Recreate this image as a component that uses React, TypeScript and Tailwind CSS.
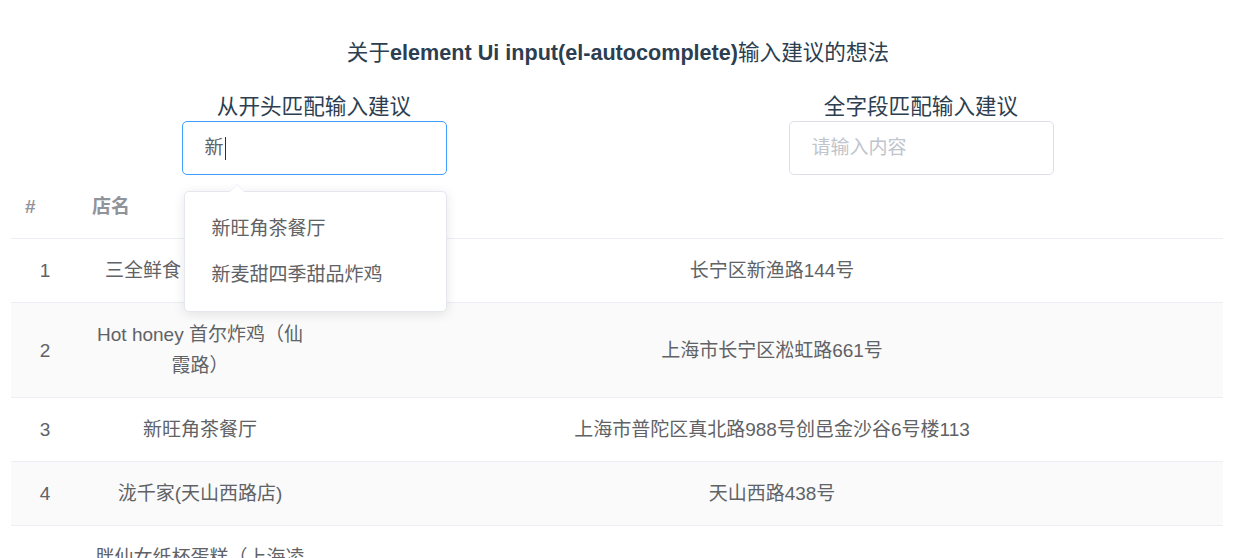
import React from "react";

const rows = [
  { id: 1, name: "三全鲜食（北新泾店）", addr: "长宁区新渔路144号" },
  { id: 2, name: "Hot honey 首尔炸鸡（仙霞路）", addr: "上海市长宁区淞虹路661号" },
  { id: 3, name: "新旺角茶餐厅", addr: "上海市普陀区真北路988号创邑金沙谷6号楼113" },
  { id: 4, name: "泷千家(天山西路店)", addr: "天山西路438号" },
  { id: 5, name: "胖仙女纸杯蛋糕（上海凌空店）", addr: "上海市长宁区金钟路968号9号楼地下一层" },
];

export default function App() {
  return (
    <div
      className="w-[1236px] h-[558px] overflow-hidden bg-white text-[#2c3e50]"
      style={{ fontFamily: '"Liberation Sans", "Noto Sans CJK SC", sans-serif' }}
    >
      <div className="pt-[37px] text-center text-[21.6px] leading-[32px] font-bold">
        <span className="font-normal">关于</span>element Ui input(el-autocomplete)<span className="font-normal">输入建议的想法</span>
      </div>

      <div className="ml-[11px] w-[1212px] mt-[24px] grid grid-cols-2">
        <div className="flex flex-col items-center">
          <div className="text-[21.6px] leading-[28px]">从开头匹配输入建议</div>
          <div className="relative w-[265px]">
            <div className="h-[54px] border border-[#409eff] rounded-[5px] flex items-center pl-[22px] text-[19px] text-[#606266]">
              <span>新</span>
              <span className="inline-block w-[1px] h-[23px] bg-[#303133] ml-[1px]" />
            </div>
            <div className="absolute z-10 left-[2px] top-[70px] w-[263px] bg-white border border-[#e4e7ed] rounded-[5px] shadow-[0_2px_12px_rgba(0,0,0,0.1)] pt-[14px] pb-[13px]">
              <div className="absolute -top-[8px] left-[44px] w-0 h-0 border-l-[8px] border-r-[8px] border-b-[8px] border-l-transparent border-r-transparent border-b-[#ebeef5]" />
              <div className="absolute -top-[7px] left-[45px] w-0 h-0 border-l-[7px] border-r-[7px] border-b-[7px] border-l-transparent border-r-transparent border-b-white" />
              <div className="h-[46px] leading-[46px] px-[27px] text-[19px] text-[#606266]">新旺角茶餐厅</div>
              <div className="h-[46px] leading-[46px] px-[27px] text-[19px] text-[#606266]">新麦甜四季甜品炸鸡</div>
            </div>
          </div>
        </div>
        <div className="flex flex-col items-center pl-[2px]">
          <div className="text-[21.6px] leading-[28px]">全字段匹配输入建议</div>
          <div className="w-[265px] h-[54px] border border-[#dcdfe6] rounded-[5px] flex items-center pl-[22px] text-[19px] text-[#c0c4cc]">
            请输入内容
          </div>
        </div>
      </div>

      <table className="ml-[11px] w-[1212px] table-fixed border-collapse text-[19px] leading-[31px] text-[#606266]">
        <colgroup>
          <col className="w-[68px]" />
          <col className="w-[242px]" />
          <col />
        </colgroup>
        <thead>
          <tr className="border-b border-[#ebeef5]">
            <th className="py-[16px] px-[14px] text-left font-bold text-[#909399]">#</th>
            <th className="py-[16px] px-[13px] text-left font-bold text-[#909399]">店名</th>
            <th className="py-[16px] px-[13px]" />
          </tr>
        </thead>
        <tbody>
          {rows.map((r, i) => (
            <tr key={r.id} className={`border-b border-[#ebeef5] ${i % 2 === 1 ? "bg-[#fafafa]" : "bg-white"}`}>
              <td className="py-[16px] px-[13px] text-center">{r.id}</td>
              <td className="py-[16px] px-[14px] text-center">{r.name}</td>
              <td className="py-[16px] px-[13px] text-center">{r.addr}</td>
            </tr>
          ))}
        </tbody>
      </table>
    </div>
  );
}
